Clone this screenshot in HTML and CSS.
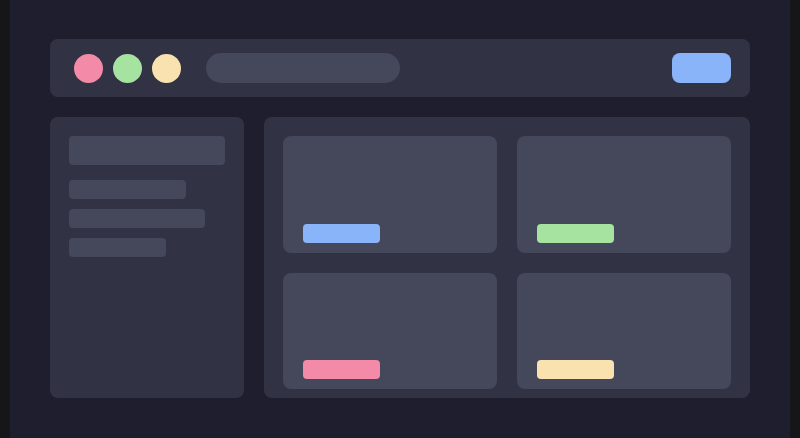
FILE: index.html
```html
<!DOCTYPE html>
<html>
<head>
<meta charset="utf-8">
<link rel="stylesheet" href="styles.css">
</head>
<body>
<div class="app">
  <header class="topbar">
    <span class="dot dot-red"></span>
    <span class="dot dot-green"></span>
    <span class="dot dot-yellow"></span>
    <span class="search"></span>
    <span class="action"></span>
  </header>
  <div class="content">
    <aside class="sidebar">
      <div class="side-title"></div>
      <div class="side-rows">
        <div class="side-row w1"></div>
        <div class="side-row w2"></div>
        <div class="side-row w3"></div>
      </div>
    </aside>
    <main class="panel">
      <div class="card"><span class="tag tag-blue"></span></div>
      <div class="card"><span class="tag tag-green"></span></div>
      <div class="card"><span class="tag tag-red"></span></div>
      <div class="card"><span class="tag tag-yellow"></span></div>
    </main>
  </div>
</div>
</body>
</html>
```

FILE: styles.css
```css
html, body {
  margin: 0;
  padding: 0;
  background: #161618;
  font-family: "Liberation Sans", Arial, sans-serif;
}

.app {
  margin: 0 10px;
  height: 438px;
  box-sizing: border-box;
  background: #1e1e2e;
  padding: 39px 40px 0;
}

.topbar {
  height: 58px;
  box-sizing: border-box;
  background: #313244;
  border-radius: 8px;
  display: flex;
  align-items: center;
  padding: 0 19px 0 24px;
  gap: 10px;
}

.dot {
  width: 29px;
  height: 29px;
  border-radius: 50%;
  flex: none;
}
.dot-red { background: #f38ba8; }
.dot-green { background: #a6e3a1; }
.dot-yellow { background: #f9e2af; }

.search {
  margin-left: 15px;
  width: 194px;
  height: 30px;
  border-radius: 15px;
  background: #45475a;
}

.action {
  margin-left: auto;
  width: 59px;
  height: 30px;
  border-radius: 8px;
  background: #89b4fa;
}

.content {
  margin-top: 20px;
  display: grid;
  grid-template-columns: 194px 486px;
  gap: 20px;
  height: 281px;
}

.sidebar {
  background: #313244;
  border-radius: 8px;
  padding: 19px;
  box-sizing: border-box;
}

.side-title {
  height: 29px;
  border-radius: 4px;
  background: #45475a;
}

.side-rows {
  margin-top: 15px;
  display: flex;
  flex-direction: column;
  gap: 10px;
}

.side-row {
  height: 19px;
  border-radius: 4px;
  background: #45475a;
}
.w1 { width: 117px; }
.w2 { width: 136px; }
.w3 { width: 97px; }

.panel {
  background: #313244;
  border-radius: 8px;
  padding: 19px 19px 9px;
  box-sizing: border-box;
  display: grid;
  grid-template-columns: 214px 214px;
  grid-template-rows: 117px 116px;
  gap: 20px;
}

.card {
  background: #45475a;
  border-radius: 8px;
  display: flex;
  flex-direction: column;
  justify-content: flex-end;
  padding: 0 20px 10px;
}

.tag {
  width: 77px;
  height: 19px;
  border-radius: 4px;
}
.tag-blue { background: #89b4fa; }
.tag-green { background: #a6e3a1; }
.tag-red { background: #f38ba8; }
.tag-yellow { background: #f9e2af; }
```
